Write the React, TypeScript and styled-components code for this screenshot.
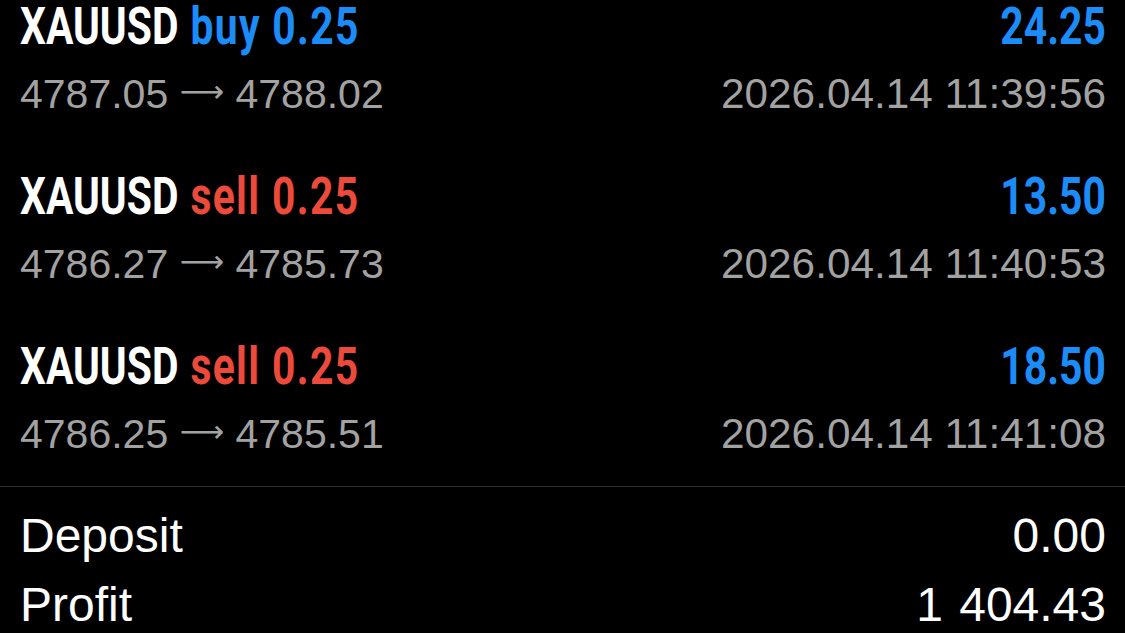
import React from "react";
import styled, {createGlobalStyle} from "styled-components";

const GlobalStyle = createGlobalStyle`
  html, body {
    margin: 0;
    padding: 0;
    background: #000;
    overflow: hidden;
  }
`;

const Screen = styled.div`
  width: 1125px;
  height: 633px;
  background: #000;
  color: #fff;
  font-family: "Liberation Sans", Arial, sans-serif;
  display: flex;
  flex-direction: column;
`;

const DealList = styled.ul`
  list-style: none;
  margin: 0;
  padding: 0 19px 0 20px;
  display: flex;
  flex-direction: column;
  gap: 52px;
`;

const DealRow = styled.li`
  display: flex;
  flex-direction: column;
  gap: 17px;
`;

const Line = styled.div`
  display: flex;
  justify-content: space-between;
  align-items: baseline;
  white-space: nowrap;
`;

// condensed bold look: Roboto bold squeezed horizontally
const Title = styled.div`
  font-family: Roboto, "Liberation Sans", sans-serif;
  font-weight: 700;
  font-size: 51px;
  line-height: 53px;
  transform: scaleX(0.8);
  transform-origin: left center;
`;

const Symbol = styled.span`
  color: #fff;
`;

const Side = styled.span<{ $sell?: boolean }>`
  color: ${p => p.$sell ? "#ec4a3b" : "#1c8cf8"};
  margin-left: 15px;
  letter-spacing: 1.7px;
`;

const Amount = styled(Title)`
  color: #1c8cf8;
  transform-origin: right center;
`;

const Detail = styled.div<{ $size?: number }>`
  font-size: ${p => p.$size ?? 41}px;
  line-height: 48px;
  color: #a2a2a2;
`;

const Arrow = styled.span`
  font-family: "DejaVu Sans", sans-serif;
  font-size: 31px;
  line-height: 0;
  vertical-align: 6px;
`;

const Divider = styled.hr`
  margin: 28px 0 0;
  border: 0;
  border-top: 1px solid #2f2f2f;
  width: 100%;
`;

const Summary = styled.div`
  padding: 21px 19px 0 20px;
  display: flex;
  flex-direction: column;
  gap: 13px;
`;

const SummaryRow = styled(Line)`
  font-size: 48px;
  line-height: 56px;
  color: #fff;
`;

const Money = styled.span`
  word-spacing: 3px;
`;

type Deal = {
  side: "buy" | "sell";
  volume: string;
  open: string;
  close: string;
  profit: string;
  time: string;
};

const deals: Deal[] = [
  {side: "buy", volume: "0.25", open: "4787.05", close: "4788.02", profit: "24.25", time: "2026.04.14 11:39:56"},
  {side: "sell", volume: "0.25", open: "4786.27", close: "4785.73", profit: "13.50", time: "2026.04.14 11:40:53"},
  {side: "sell", volume: "0.25", open: "4786.25", close: "4785.51", profit: "18.50", time: "2026.04.14 11:41:08"},
];

const App: React.FC = () => {
  return (
    <Screen>
      <GlobalStyle/>
      <DealList>
        {deals.map((d, i) => (
          <DealRow key={i}>
            <Line>
              <Title>
                <Symbol>XAUUSD</Symbol>
                <Side $sell={d.side === "sell"}>{d.side} {d.volume}</Side>
              </Title>
              <Amount>{d.profit}</Amount>
            </Line>
            <Line>
              <Detail>{d.open} <Arrow>⟶</Arrow> {d.close}</Detail>
              <Detail $size={42.3}>{d.time}</Detail>
            </Line>
          </DealRow>
        ))}
      </DealList>
      <Divider/>
      <Summary>
        <SummaryRow>
          <span>Deposit</span>
          <Money>0.00</Money>
        </SummaryRow>
        <SummaryRow>
          <span>Profit</span>
          <Money>1 404.43</Money>
        </SummaryRow>
      </Summary>
    </Screen>
  );
};

export default App;
